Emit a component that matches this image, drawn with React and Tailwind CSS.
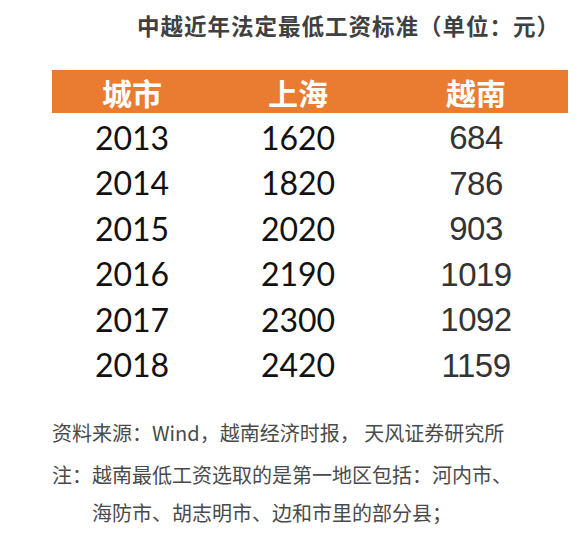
import React from "react";

const rows = [
  ["2013", "1620", "684"],
  ["2014", "1820", "786"],
  ["2015", "2020", "903"],
  ["2016", "2190", "1019"],
  ["2017", "2300", "1092"],
  ["2018", "2420", "1159"],
];

const cjk = { fontFamily: '"Noto Sans CJK SC", "Noto Sans", sans-serif' };
const numLeft = { fontFamily: 'Lato, "Liberation Sans", sans-serif' };
const numRight = { fontFamily: '"Liberation Sans", Arial, sans-serif' };

export default function App() {
  return (
    <div className="w-[579px] h-[540px] bg-white overflow-hidden" style={cjk}>
      <div className="pt-[10px] pl-[137px] text-[22.5px] leading-[30px] font-bold text-[#404040] tracking-[1px] whitespace-nowrap">
        中越近年法定最低工资标准（单位：元）
      </div>

      <div className="ml-[52px] mt-[30px] w-[516px]">
        <div className="grid grid-cols-[160px_172px_184px] h-[43px] bg-[#E97C30] items-center text-white font-bold text-[30px]">
          <div className="text-center">城市</div>
          <div className="text-center">上海</div>
          <div className="text-center">越南</div>
        </div>

        {rows.map((r) => (
          <div key={r[0]} className="grid grid-cols-[160px_172px_184px] h-[45.5px] items-center">
            <div className="text-center text-[32px] text-[#111]" style={numLeft}>{r[0]}</div>
            <div className="text-center text-[32px] text-[#111]" style={numLeft}>{r[1]}</div>
            <div className="text-center text-[33px] text-[#333] tracking-[-0.5px]" style={numRight}>{r[2]}</div>
          </div>
        ))}
      </div>

      <div className="pl-[52px] mt-[28px] text-[20px] text-[#4a4a4a] leading-[38px] whitespace-nowrap">
        <div>资料来源：Wind，越南经济时报， 天风证券研究所</div>
        <div className="mt-[4px]">注：越南最低工资选取的是第一地区包括：河内市、</div>
        <div className="pl-[40px]">海防市、胡志明市、边和市里的部分县；</div>
      </div>
    </div>
  );
}
